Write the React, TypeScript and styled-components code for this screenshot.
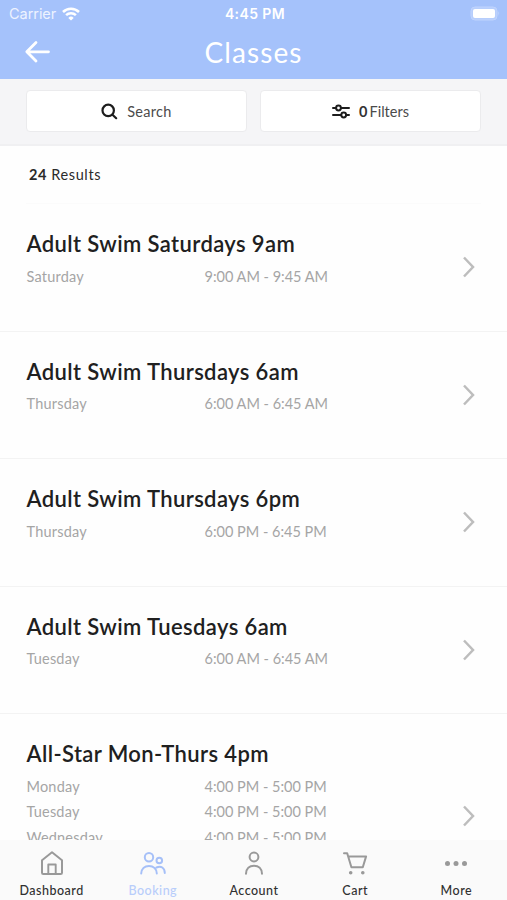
import React from "react";
import styled, { createGlobalStyle } from "styled-components";

const GlobalStyle = createGlobalStyle`
  * { box-sizing: border-box; }
  body { margin: 0; background: #fff; font-family: Lato, "Noto Sans", sans-serif; }
`;

const Screen = styled.div`
  display: flex;
  flex-direction: column;
  height: 900px;
  overflow: hidden;
  background: #fefefe;
`;
const Header = styled.header`
  height: 79px;
  flex: none;
  background: #a5c2fb;
  color: #fff;
`;
const StatusBar = styled.div`
  display: grid;
  grid-template-columns: 1fr auto 1fr;
  align-items: center;
  height: 27px;
  padding: 0 6px 0 9px;
  font-family: Inter, sans-serif;
  font-size: 14.5px;
`;
const Carrier = styled.div`
  display: flex;
  align-items: center;
  gap: 6px;
  color: #edf3ff;
  letter-spacing: -0.05px;
`;
const Clock = styled.div`
  font-weight: 600;
  font-size: 14px;
  letter-spacing: 0.4px;
`;
const BatterySlot = styled.div`
  display: flex;
  justify-content: flex-end;
`;
const TitleBar = styled.div`
  display: grid;
  grid-template-columns: 60px 1fr 60px;
  align-items: center;
  height: 50px;
`;
const BackButton = styled.div`
  display: flex;
  padding-left: 24px;
`;
const PageTitle = styled.h1`
  margin: 0;
  text-align: center;
  font-weight: 400;
  font-size: 28px;
  line-height: 50px;
  letter-spacing: 1.1px;
`;
const Toolbar = styled.div`
  display: flex;
  flex: none;
  gap: 13px;
  height: 67px;
  padding: 11px 26px 0;
  background: #f5f5f7;
  border-bottom: 2px solid #f0f0f2;
`;
const ToolButton = styled.div`
  display: flex;
  flex: 1;
  align-items: center;
  justify-content: center;
  height: 42px;
  background: #fff;
  border: 1px solid #ebebed;
  border-radius: 4px;
  color: #4b4b4b;
  font-size: 14.5px;
`;
const ToolLabel = styled.span<{ $gap: number; $spacing: number }>`
  margin-left: ${(p) => p.$gap}px;
  letter-spacing: ${(p) => p.$spacing}px;
  b { font-weight: 700; color: #333; margin-right: 2px; }
`;
const Results = styled.div`
  height: 58px;
  flex: none;
  margin: 0 26px;
  padding-left: 3px;
  border-bottom: 1px solid #fbfbfb;
  line-height: 57px;
  font-size: 14.5px;
  letter-spacing: 0.6px;
  color: #2b2b2b;
  b { font-weight: 700; }
`;
const List = styled.main`
  flex: 1;
  min-height: 0;
  overflow: hidden;
`;
const ClassRow = styled.section`
  display: flex;
  align-items: center;
  justify-content: space-between;
  padding: 25px 32px 0 26.5px;
  min-height: 127.5px;
  border-bottom: 1px solid #f3f3f3;
`;
const ClassBody = styled.div`
  align-self: stretch;
  padding-bottom: 41.5px;
`;
const ClassTitle = styled.h2`
  margin: 0;
  height: 34.5px;
  line-height: 30px;
  font-size: 22px;
  font-weight: 600;
  color: #202020;
  white-space: nowrap;
  letter-spacing: 0.39px;
`;
const Session = styled.div`
  display: grid;
  grid-template-columns: 178px 140px;
  height: 25.5px;
  line-height: 26px;
  font-size: 14.5px;
  letter-spacing: 0.2px;
  color: #a5a5a5;
  white-space: nowrap;
`;
const Time = styled.span`
  letter-spacing: 0;
`;
const ChevronSlot = styled.div`
  display: flex;
  margin-top: -25px;
`;
const TabBar = styled.nav`
  display: grid;
  grid-template-columns: repeat(5, 1fr);
  flex: none;
  height: 60px;
  padding-left: 1px;
  background: #fafafa;
`;
const Tab = styled.div<{ $active?: boolean }>`
  display: flex;
  flex-direction: column;
  align-items: center;
  padding-top: 10px;
  color: ${(p) => (p.$active ? "#a6c0f8" : "#999")};
`;
const TabLabel = styled.span<{ $active?: boolean }>`
  margin-top: 5px;
  line-height: 18px;
  font-size: 12.5px;
  font-weight: 500;
  letter-spacing: 0.5px;
  color: ${(p) => (p.$active ? "#b8cdfb" : "#303030")};
`;

const classes = [
  { title: "Adult Swim Saturdays 9am", sessions: [["Saturday", "9:00 AM - 9:45 AM"]] },
  { title: "Adult Swim Thursdays 6am", sessions: [["Thursday", "6:00 AM - 6:45 AM"]] },
  { title: "Adult Swim Thursdays 6pm", sessions: [["Thursday", "6:00 PM - 6:45 PM"]] },
  { title: "Adult Swim Tuesdays 6am", sessions: [["Tuesday", "6:00 AM - 6:45 AM"]] },
  {
    title: "All-Star Mon-Thurs 4pm",
    sessions: [
      ["Monday", "4:00 PM - 5:00 PM"],
      ["Tuesday", "4:00 PM - 5:00 PM"],
      ["Wednesday", "4:00 PM - 5:00 PM"],
      ["Thursday", "4:00 PM - 5:00 PM"],
    ],
  },
];

const stroke = { fill: "none", stroke: "currentColor", strokeLinecap: "round", strokeLinejoin: "round" } as const;

const tabs = [
  {
    label: "Dashboard",
    icon: (
      <g strokeWidth="2">
        <path d="M4 10.2 14 2.3l10 7.9v12.6a1.3 1.3 0 0 1-1.3 1.3H5.300a1.300 1.300 0 0 1-1.300-1.300Z" />
        <path d="M10.300 24V14.500h7.400V24" strokeWidth="1.900" />
      </g>
    ),
  },
  {
    label: "Booking",
    active: true,
    icon: (
      <g strokeWidth="2">
        <circle cx="10" cy="7.2" r="4.2" />
        <circle cx="20.3" cy="10.5" r="2.8" />
        <path d="M2.2 23.5c.2-4.7 3.4-7.6 7.8-7.6s7.6 2.9 7.8 7.6M17.5 17.5c4.5-2.3 8.2.4 8.3 5.5" />
      </g>
    ),
  },
  {
    label: "Account",
    icon: (
      <g strokeWidth="2">
        <circle cx="14" cy="7" r="4.4" />
        <path d="M6 23.7c.2-5 3.4-8 8-8s7.8 3 8 8" />
      </g>
    ),
  },
  {
    label: "Cart",
    icon: (
      <g strokeWidth="2">
        <path d="M3 3.2h3.2l4.2 14h11.4l3.3-10.8H7.2" />
        <circle cx="9.7" cy="22.8" r="1.1" fill="currentColor" strokeWidth="1.4" />
        <circle cx="21.8" cy="22.8" r="1.1" fill="currentColor" strokeWidth="1.4" />
      </g>
    ),
  },
  {
    label: "More",
    icon: (
      <g fill="currentColor" stroke="none">
        <circle cx="5.5" cy="13.5" r="2.5" />
        <circle cx="14" cy="13.5" r="2.5" />
        <circle cx="22.5" cy="13.5" r="2.5" />
      </g>
    ),
  },
];

export default function App() {
  return (
    <Screen>
      <GlobalStyle />
      <Header>
        <StatusBar>
          <Carrier>
            Carrier
            <svg width="18" height="14" viewBox="0 0 18 14" fill="none" stroke="#fff" strokeWidth="2.5">
              <path d="M1 5a11.4 11.4 0 0 1 16 0M4.1 8.2a7 7 0 0 1 9.8 0" />
              <path d="M9 13.6 6.3 10.9a3.8 3.8 0 0 1 5.4 0Z" fill="#fff" stroke="none" />
            </svg>
          </Carrier>
          <Clock>4:45 PM</Clock>
          <BatterySlot>
            <svg width="31" height="15" viewBox="0 0 31 15">
              <rect x="1" y="1" width="26" height="13" rx="4" fill="#b7cefc" stroke="#c0d4fd" strokeWidth="1" />
              <rect x="3" y="3" width="22" height="9" rx="2" fill="#fff" />
              <path d="M28.5 5.3q1.8 2.2 0 4.4z" fill="#c9dafd" />
            </svg>
          </BatterySlot>
        </StatusBar>
        <TitleBar>
          <BackButton>
            <svg width="27" height="24" viewBox="0 0 27 24" {...stroke} strokeWidth="2.8">
              <path d="M12 2.5 2.8 11.8l9.2 9.3M3 11.8h21.5" />
            </svg>
          </BackButton>
          <PageTitle>Classes</PageTitle>
        </TitleBar>
      </Header>
      <Toolbar>
        <ToolButton>
          <svg width="17" height="17" viewBox="0 0 17 17" {...stroke} stroke="#1d1d1d" strokeWidth="2.2">
            <circle cx="7.2" cy="7.4" r="5.7" />
            <path d="m11.5 11.7 3.7 3.5" />
          </svg>
          <ToolLabel $gap={9} $spacing={0.3}>Search</ToolLabel>
        </ToolButton>
        <ToolButton>
          <svg width="18" height="15" viewBox="0 0 18 15" {...stroke} stroke="#1d1d1d" strokeWidth="2">
            <path d="M1 4h3M9 4h8M1 11h8M14 11h3" />
            <circle cx="6.5" cy="4" r="2.4" />
            <circle cx="11.7" cy="11" r="2.4" />
          </svg>
          <ToolLabel $gap={9} $spacing={0}><b>0</b>Filters</ToolLabel>
        </ToolButton>
      </Toolbar>
      <Results><b>24</b> Results</Results>
      <List>
        {classes.map((c) => (
          <ClassRow key={c.title}>
            <ClassBody>
              <ClassTitle>{c.title}</ClassTitle>
              {c.sessions.map(([day, time]) => (
                <Session key={day}>
                  <span>{day}</span>
                  <Time>{time}</Time>
                </Session>
              ))}
            </ClassBody>
            <ChevronSlot>
              <svg width="13" height="22" viewBox="0 0 13 22" fill="none" stroke="#bdbdbd" strokeWidth="2.5">
                <path d="m2 1.500 9 9.500-9 9.500" />
              </svg>
            </ChevronSlot>
          </ClassRow>
        ))}
      </List>
      <TabBar>
        {tabs.map((t) => (
          <Tab key={t.label} $active={t.active}>
            <svg width="28" height="27" viewBox="0 0 28 27" {...stroke}>{t.icon}</svg>
            <TabLabel $active={t.active}>{t.label}</TabLabel>
          </Tab>
        ))}
      </TabBar>
    </Screen>
  );
}
